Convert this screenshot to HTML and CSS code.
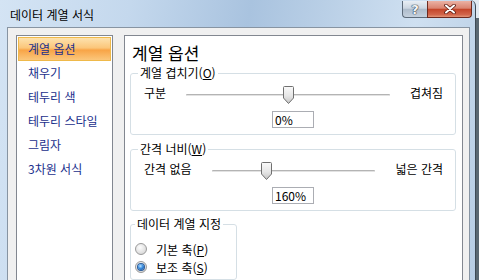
FILE: index.html
```html
<!DOCTYPE html>
<html lang="ko">
<head>
  <meta charset="UTF-8">
  <title>데이터 계열 서식</title>
  <link rel="stylesheet" href="styles.css">
</head>
<body>
  <div class="window">
    <div class="titlebar">
      <span class="title">데이터 계열 서식</span>
      <div class="caption-buttons">
        <button class="cap help">?</button>
        <button class="cap close">
          <svg width="12" height="10" viewBox="0 0 12 10">
            <path d="M2 1.5l8 7M10 1.5l-8 7" stroke="#5a1a10" stroke-width="3.6" stroke-linecap="round"/>
            <path d="M2 1.5l8 7M10 1.5l-8 7" stroke="#fff" stroke-width="2" stroke-linecap="round"/>
          </svg>
        </button>
      </div>
    </div>

    <div class="client">
      <ul class="categories">
        <li class="selected">계열 옵션</li>
        <li>채우기</li>
        <li>테두리 색</li>
        <li>테두리 스타일</li>
        <li>그림자</li>
        <li>3차원 서식</li>
      </ul>

      <div class="panel">
        <h2>계열 옵션</h2>

        <fieldset class="group">
          <legend>계열 겹치기(<u>O</u>)</legend>
          <div class="slider-row">
            <span>구분</span>
            <div class="slider">
              <div class="track"></div>
              <div class="thumb-range">
                <svg class="thumb" style="left: 50%" width="11" height="18" viewBox="0 0 11 18">
                  <defs>
                    <linearGradient id="thumb1" x1="0" y1="0" x2="0" y2="1">
                      <stop offset="0" stop-color="#fafafa"/>
                      <stop offset="0.55" stop-color="#e6e6e6"/>
                      <stop offset="1" stop-color="#c4c4c4"/>
                    </linearGradient>
                  </defs>
                  <path d="M1.5 0.5h8a1 1 0 0 1 1 1v10.5l-5 5.5l-5-5.5v-10.5a1 1 0 0 1 1-1z" fill="url(#thumb1)" stroke="#707070"/>
                </svg>
              </div>
            </div>
            <span>겹쳐짐</span>
          </div>
          <div class="value">0%</div>
        </fieldset>

        <fieldset class="group">
          <legend>간격 너비(<u>W</u>)</legend>
          <div class="slider-row">
            <span>간격 없음</span>
            <div class="slider">
              <div class="track"></div>
              <div class="thumb-range">
                <svg class="thumb" style="left: 32%" width="11" height="18" viewBox="0 0 11 18">
                  <defs>
                    <linearGradient id="thumb2" x1="0" y1="0" x2="0" y2="1">
                      <stop offset="0" stop-color="#fafafa"/>
                      <stop offset="0.55" stop-color="#e6e6e6"/>
                      <stop offset="1" stop-color="#c4c4c4"/>
                    </linearGradient>
                  </defs>
                  <path d="M1.5 0.5h8a1 1 0 0 1 1 1v10.5l-5 5.5l-5-5.5v-10.5a1 1 0 0 1 1-1z" fill="url(#thumb2)" stroke="#707070"/>
                </svg>
              </div>
            </div>
            <span>넓은 간격</span>
          </div>
          <div class="value">160%</div>
        </fieldset>

        <fieldset class="group axis">
          <legend>데이터 계열 지정</legend>
          <label class="radio"><span class="dot"></span><span>기본 축(<u>P</u>)</span></label>
          <label class="radio"><span class="dot checked"></span><span>보조 축(<u>S</u>)</span></label>
        </fieldset>
      </div>
    </div>
  </div>
</body>
</html>
```

FILE: styles.css
```css
body {
  margin: 0;
  font-family: "Noto Sans CJK KR", "Noto Sans", sans-serif;
  font-size: 12px;
  color: #000;
  background: linear-gradient(#e2eaf2 0, #e2eaf2 18px, #5a6872 18px);
}

.window {
  width: 476px;
  height: 280px;
  overflow: hidden;
  box-sizing: border-box;
  border-right: 1px solid #3e4a55;
  border-top-right-radius: 6px;
  background: linear-gradient(100deg, #d4e4f4 0%, #c4d8ed 25%, #a9c3df 48%, #b9cfe6 62%, #cfe0f1 80%, #b7cde4 100%);
}

.titlebar {
  display: flex;
  height: 27px;
}

.title {
  padding: 2px 0 0 10px;
  line-height: 25px;
}

.caption-buttons {
  display: flex;
  margin: 1px 3px 0 auto;
  height: 17px;
}

.cap {
  height: 17px;
  padding: 0;
  border: 1px solid #5d6b7a;
  border-top: none;
  display: flex;
  align-items: center;
  justify-content: center;
}

.help {
  width: 25px;
  border-right: none;
  border-radius: 0 0 0 4px;
  background: linear-gradient(#e8eef4, #ccd6e1 45%, #aebccb 52%, #c5d1de);
  font: bold 13px "DejaVu Sans", sans-serif;
  color: #f4f6f8;
  text-shadow: 0 0 1px #2c3846, 0 0 1px #2c3846, 0 0 1px #2c3846;
}

.close {
  width: 45px;
  border-color: #6e2a1e;
  border-radius: 0 0 4px 0;
  background: linear-gradient(#ebb2a4, #da8470 45%, #c4462a 52%, #d2654a 85%, #e39678);
}

.client {
  display: flex;
  align-items: flex-start;
  gap: 11px;
  height: 260px;
  margin: 0 5px 0 7px;
  padding: 7px 6px 0 8px;
  border: 1px solid #8794a2;
  background: #f0f0f0;
}

.categories {
  list-style: none;
  margin: 0;
  padding: 1px;
  width: 97px;
  height: 250px;
  box-sizing: border-box;
  flex-shrink: 0;
  border: 1px solid #828790;
  background: #fff;
}

.categories li {
  height: 24px;
  box-sizing: border-box;
  line-height: 22px;
  padding-left: 9px;
  border: 1px solid transparent;
  color: #1a2f8c;
  white-space: nowrap;
}

.categories li.selected {
  border-color: #efb94a;
  background: linear-gradient(#fde2ae, #fbc67a 45%, #f8a446 55%, #fbc77c);
}

.panel {
  width: 339px;
  height: 250px;
  box-sizing: border-box;
  padding: 0 6px 0 5px;
  border: 1px solid #828790;
  background: #fff;
}

.panel h2 {
  margin: 0 0 1px;
  padding: 6px 0 0 2px;
  font-size: 17px;
  font-weight: normal;
  line-height: 22px;
}

.group {
  margin: 0 0 6px;
  padding: 0 0 6px 7px;
  min-width: 0;
  border: 1px solid #d5dfe5;
  border-radius: 3px;
}

.group legend {
  padding: 0 2px;
  line-height: 16px;
}

.slider-row {
  display: flex;
  align-items: center;
  gap: 20px;
  height: 22px;
  padding: 0 12px 0 6px;
  white-space: nowrap;
}

.slider {
  flex: 1;
  position: relative;
  height: 22px;
}

.track {
  position: absolute;
  left: 0;
  right: 0;
  top: 13px;
  height: 1px;
  border-bottom: 1px solid #e2e2e2;
  background: #b4b4b4;
  border-radius: 1px;
}

.thumb-range {
  position: absolute;
  left: 6px;
  right: 6px;
  top: 5px;
  height: 18px;
}

.thumb {
  position: absolute;
  top: 0;
  margin-left: -5px;
}

.value {
  width: 42px;
  height: 17px;
  box-sizing: border-box;
  margin: 8px 0 0 134px;
  padding-left: 2px;
  border: 1px solid #abadb3;
  line-height: 15px;
}

.axis {
  width: 107px;
  box-sizing: border-box;
  margin: -1px 0 0;
  padding: 8px 0 3px 4px;
}

.radio {
  display: flex;
  align-items: center;
  gap: 9px;
  height: 18px;
  white-space: nowrap;
}

.dot {
  width: 12px;
  height: 12px;
  box-sizing: border-box;
  border-radius: 50%;
  border: 1px solid #9a9a9a;
  background: radial-gradient(circle at 40% 35%, #fdfdfd, #dcdcdc 70%, #c8c8c8);
  display: flex;
  align-items: center;
  justify-content: center;
}

.dot.checked::after {
  content: "";
  width: 6px;
  height: 6px;
  border-radius: 50%;
  background: radial-gradient(circle at 40% 35%, #bfe4ff, #3a8ee0 45%, #0e3f8c);
  box-shadow: 0 0 0 1px #2a5c9a;
}
```
